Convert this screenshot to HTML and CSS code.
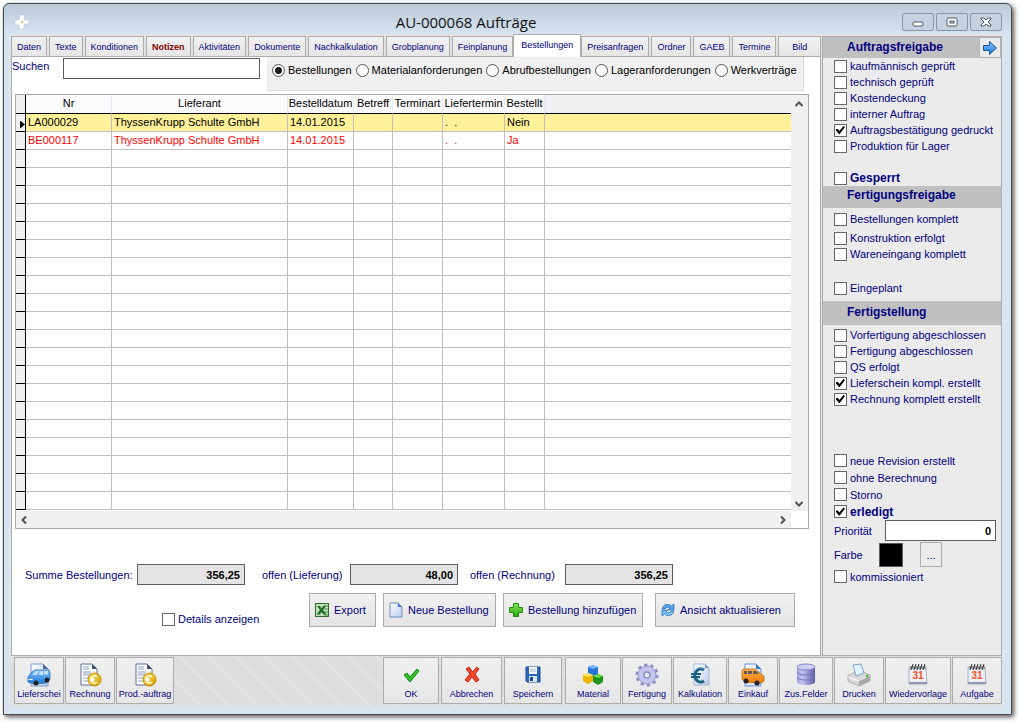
FILE: index.html
```html
<!DOCTYPE html>
<html lang="de">
<head>
<meta charset="utf-8">
<title>AU-000068 Aufträge</title>
<link rel="stylesheet" href="styles.css">
</head>
<body>
<svg class="defs" aria-hidden="true">
  <defs>
    <linearGradient id="gold" x1="0" y1="0" x2="1" y2="1"><stop offset="0" stop-color="#ffe45c"/><stop offset="1" stop-color="#d99a00"/></linearGradient>
    <linearGradient id="paper" x1="0" y1="0" x2="1" y2="1"><stop offset="0" stop-color="#ffffff"/><stop offset="1" stop-color="#b9cdf0"/></linearGradient>
    <linearGradient id="sky" x1="0" y1="0" x2="0" y2="1"><stop offset="0" stop-color="#7cc4fa"/><stop offset="1" stop-color="#1f78d8"/></linearGradient>
    <linearGradient id="orange" x1="0" y1="0" x2="0" y2="1"><stop offset="0" stop-color="#ffb347"/><stop offset="1" stop-color="#ee7c0c"/></linearGradient>
    <linearGradient id="drum" x1="0" y1="0" x2="1" y2="0"><stop offset="0" stop-color="#a3a3dd"/><stop offset=".3" stop-color="#c4c4f0"/><stop offset="1" stop-color="#5c5ca8"/></linearGradient>
    <linearGradient id="green" x1="0" y1="0" x2="0" y2="1"><stop offset="0" stop-color="#8aea50"/><stop offset="1" stop-color="#25a80c"/></linearGradient>
    <symbol id="i-invoice" viewBox="0 0 24 24">
      <path d="M3 1h11l5 5v16H3z" fill="#fff" stroke="#5a6c98"/>
      <path d="M5 8h8v5H5z" fill="#c3cde6"/><path d="M5 4h6M5 6h6M5 15h6M5 18h5" stroke="#8fa0c8"/>
      <path d="M14 1v5h5z" fill="#3e4f78"/>
      <circle cx="16.500" cy="16.500" r="6.500" fill="url(#gold)" stroke="#c98d00"/>
      <path d="M19 14a3.500 3.500 0 1 0 0 5M12.500 15.700h4.500M12.500 17.500h4" fill="none" stroke="#fff" stroke-width="1.500"/>
    </symbol>
    <symbol id="i-calendar" viewBox="0 0 24 24">
      <path d="M3 4h17l1 17H3z" fill="#eef0f6" stroke="#a9aec4"/><path d="M3 19h18v2H3z" fill="#8f96b8"/>
      <path d="M4 3h16v3H4z" fill="#9a9aa4"/>
      <path d="M5 7l2-6M8 7l2-6M11 7l2-6M14 7l2-6M17 7l2-6" stroke="#333" stroke-width="1"/>
      <text x="12" y="16" text-anchor="middle" class="cal-day">31</text>
    </symbol>
  </defs>
</svg>

<div class="window">
  <header class="titlebar">
    <svg class="app-icon" viewBox="0 0 16 16"><path d="M6 1h5l-1 5h5v4h-5v5H5v-4H1V6h4z" fill="#fff" stroke="#b9c9d8" stroke-width=".7"/><circle cx="8" cy="8" r="1" fill="#f08c3c"/></svg>
    <h1 class="title">AU-000068 Aufträge</h1>
    <div class="window-buttons">
      <button class="win-btn" type="button" aria-label="Minimieren"><svg viewBox="0 0 14 12"><rect x="2" y="6" width="10" height="4" rx="1" fill="#fff" stroke="#505866"/></svg></button>
      <button class="win-btn" type="button" aria-label="Maximieren"><svg viewBox="0 0 14 12"><rect x="2" y="2" width="10" height="8" rx="1" fill="#fff" stroke="#505866"/><rect x="5" y="5" width="4" height="2" fill="#c9d6e4" stroke="#505866"/></svg></button>
      <button class="win-btn" type="button" aria-label="Schließen"><svg viewBox="0 0 14 12"><path d="M2 2h3l2 2 2-2h3v1L9 6l3 3v1H9L7 8l-2 2H2V9l3-3-3-3z" fill="#fff" stroke="#505866"/></svg></button>
    </div>
  </header>

  <div class="client">
    <div class="columns">
      <main class="main">
        <div class="tabs" role="tablist">
          <button class="tab" type="button" role="tab">Daten</button>
          <button class="tab" type="button" role="tab">Texte</button>
          <button class="tab" type="button" role="tab">Konditionen</button>
          <button class="tab tab-note" type="button" role="tab">Notizen</button>
          <button class="tab" type="button" role="tab">Aktivitäten</button>
          <button class="tab" type="button" role="tab">Dokumente</button>
          <button class="tab" type="button" role="tab">Nachkalkulation</button>
          <button class="tab" type="button" role="tab">Grobplanung</button>
          <button class="tab" type="button" role="tab">Feinplanung</button>
          <button class="tab tab-active" type="button" role="tab" aria-selected="true">Bestellungen</button>
          <button class="tab" type="button" role="tab">Preisanfragen</button>
          <button class="tab" type="button" role="tab">Ordner</button>
          <button class="tab" type="button" role="tab">GAEB</button>
          <button class="tab" type="button" role="tab">Termine</button>
          <button class="tab tab-last" type="button" role="tab">Bild</button>
        </div>

        <section class="page">
          <div class="search-row">
            <label class="search-label" for="search">Suchen</label>
            <input class="search-input" id="search" type="text">
            <div class="radio-group" role="radiogroup">
              <label class="radio"><input type="radio" name="kind" checked>Bestellungen</label>
              <label class="radio"><input type="radio" name="kind">Materialanforderungen</label>
              <label class="radio"><input type="radio" name="kind">Abrufbestellungen</label>
              <label class="radio"><input type="radio" name="kind">Lageranforderungen</label>
              <label class="radio"><input type="radio" name="kind">Werkverträge</label>
            </div>
          </div>

          <div class="grid-box">
            <table class="grid">
              <colgroup><col class="c-mark"><col class="c-nr"><col class="c-supplier"><col class="c-date"><col class="c-subject"><col class="c-kind"><col class="c-delivery"><col class="c-ordered"><col></colgroup>
              <thead><tr><th></th><th>Nr</th><th>Lieferant</th><th>Bestelldatum</th><th>Betreff</th><th>Terminart</th><th>Liefertermin</th><th>Bestellt</th><th class="rest"></th></tr></thead>
              <tbody>
                <tr class="current"><td><span class="marker"></span></td><td>LA000029</td><td>ThyssenKrupp Schulte GmbH</td><td>14.01.2015</td><td></td><td></td><td>.&nbsp; .</td><td>Nein</td><td></td></tr>
                <tr class="done"><td></td><td>BE000117</td><td>ThyssenKrupp Schulte GmbH</td><td>14.01.2015</td><td></td><td></td><td>.&nbsp; .</td><td>Ja</td><td></td></tr>
                <tr><td></td><td></td><td></td><td></td><td></td><td></td><td></td><td></td><td></td></tr>
                <tr><td></td><td></td><td></td><td></td><td></td><td></td><td></td><td></td><td></td></tr>
                <tr><td></td><td></td><td></td><td></td><td></td><td></td><td></td><td></td><td></td></tr>
                <tr><td></td><td></td><td></td><td></td><td></td><td></td><td></td><td></td><td></td></tr>
                <tr><td></td><td></td><td></td><td></td><td></td><td></td><td></td><td></td><td></td></tr>
                <tr><td></td><td></td><td></td><td></td><td></td><td></td><td></td><td></td><td></td></tr>
                <tr><td></td><td></td><td></td><td></td><td></td><td></td><td></td><td></td><td></td></tr>
                <tr><td></td><td></td><td></td><td></td><td></td><td></td><td></td><td></td><td></td></tr>
                <tr><td></td><td></td><td></td><td></td><td></td><td></td><td></td><td></td><td></td></tr>
                <tr><td></td><td></td><td></td><td></td><td></td><td></td><td></td><td></td><td></td></tr>
                <tr><td></td><td></td><td></td><td></td><td></td><td></td><td></td><td></td><td></td></tr>
                <tr><td></td><td></td><td></td><td></td><td></td><td></td><td></td><td></td><td></td></tr>
                <tr><td></td><td></td><td></td><td></td><td></td><td></td><td></td><td></td><td></td></tr>
                <tr><td></td><td></td><td></td><td></td><td></td><td></td><td></td><td></td><td></td></tr>
                <tr><td></td><td></td><td></td><td></td><td></td><td></td><td></td><td></td><td></td></tr>
                <tr><td></td><td></td><td></td><td></td><td></td><td></td><td></td><td></td><td></td></tr>
                <tr><td></td><td></td><td></td><td></td><td></td><td></td><td></td><td></td><td></td></tr>
                <tr><td></td><td></td><td></td><td></td><td></td><td></td><td></td><td></td><td></td></tr>
                <tr><td></td><td></td><td></td><td></td><td></td><td></td><td></td><td></td><td></td></tr>
                <tr><td></td><td></td><td></td><td></td><td></td><td></td><td></td><td></td><td></td></tr>
              </tbody>
            </table>
            <div class="vscroll">
              <svg viewBox="0 0 10 10"><path d="M1.500 7L5 3.500 8.500 7" fill="none" stroke="#505050" stroke-width="2"/></svg>
              <svg viewBox="0 0 10 10"><path d="M1.500 3L5 6.500 8.500 3" fill="none" stroke="#505050" stroke-width="2"/></svg>
            </div>
            <div class="hscroll">
              <svg viewBox="0 0 10 10"><path d="M7 1.500L3.500 5 7 8.500" fill="none" stroke="#505050" stroke-width="2"/></svg>
              <svg viewBox="0 0 10 10"><path d="M3 1.500L6.500 5 3 8.500" fill="none" stroke="#505050" stroke-width="2"/></svg>
            </div>
          </div>

          <div class="sums">
            <label for="sum-all">Summe Bestellungen:</label><input class="sum" id="sum-all" type="text" value="356,25" readonly>
            <label class="sum-next" for="sum-delivery">offen (Lieferung)</label><input class="sum" id="sum-delivery" type="text" value="48,00" readonly>
            <label class="sum-last" for="sum-invoice">offen (Rechnung)</label><input class="sum" id="sum-invoice" type="text" value="356,25" readonly>
          </div>

          <div class="actions">
            <label class="check details"><input type="checkbox">Details anzeigen</label>
            <button class="action a-export" type="button"><svg viewBox="0 0 16 16"><rect x="1.500" y="1.500" width="13" height="13" fill="#c4dfbc" stroke="#2e6b34"/><path d="M10 4h4M10 7h4M10 10h4M10 13h4" stroke="#4d8a4d"/><path d="M3 4h3l1.500 2.500L9 4h3L9 8l3.500 4.500h-3L7.500 10 6 12.500H2.500L6 8z" fill="#1f6f28"/></svg>Export</button>
            <button class="action a-new" type="button"><svg viewBox="0 0 16 16"><path d="M2 1h8l4 4v10H2z" fill="url(#paper)" stroke="#6d8cc4"/><path d="M10 1v4h4z" fill="#3f78c8"/></svg>Neue Bestellung</button>
            <button class="action a-add" type="button"><svg viewBox="0 0 16 16"><path d="M5.500 1.500h5v4h4v5h-4v4h-5v-4h-4v-5h4z" fill="url(#green)" stroke="#1d8a12"/></svg>Bestellung hinzufügen</button>
            <button class="action a-refresh" type="button"><svg viewBox="0 0 16 16"><path d="M2 7C3 2.500 8 1 11.500 4L14 2v6H8l2-2C8 4.500 6 5 5 7z" fill="#55a8f0" stroke="#1c62b8" stroke-width=".7"/><path d="M14 9c-1 4.500-6 6-9.500 3L2 14V8h6l-2 2c2 1.500 4 1 5-1z" fill="#7cc0f8" stroke="#1c62b8" stroke-width=".7"/></svg>Ansicht aktualisieren</button>
          </div>
        </section>
      </main>

      <aside class="side">
        <h2 class="side-head head-order">Auftragsfreigabe<button class="next" type="button" aria-label="Weiter"><svg viewBox="0 0 16 16"><path d="M1.500 5.500h6v-4L14.500 8l-7 6.500v-4h-6z" fill="url(#sky)" stroke="#1c56a8"/></svg></button></h2>
        <div class="checks checks-order">
          <label class="check"><input type="checkbox">kaufmännisch geprüft</label>
          <label class="check"><input type="checkbox">technisch geprüft</label>
          <label class="check"><input type="checkbox">Kostendeckung</label>
          <label class="check"><input type="checkbox">interner Auftrag</label>
          <label class="check"><input type="checkbox" checked>Auftragsbestätigung gedruckt</label>
          <label class="check"><input type="checkbox">Produktion für Lager</label>
          <label class="check strong spaced"><input type="checkbox">Gesperrt</label>
        </div>
        <h2 class="side-head head-production">Fertigungsfreigabe</h2>
        <div class="checks checks-production">
          <label class="check loose"><input type="checkbox">Bestellungen komplett</label>
          <label class="check"><input type="checkbox">Konstruktion erfolgt</label>
          <label class="check"><input type="checkbox">Wareneingang komplett</label>
          <label class="check spaced"><input type="checkbox">Eingeplant</label>
        </div>
        <h2 class="side-head head-finish">Fertigstellung</h2>
        <div class="checks checks-finish">
          <label class="check"><input type="checkbox">Vorfertigung abgeschlossen</label>
          <label class="check"><input type="checkbox">Fertigung abgeschlossen</label>
          <label class="check"><input type="checkbox">QS erfolgt</label>
          <label class="check"><input type="checkbox" checked>Lieferschein kompl. erstellt</label>
          <label class="check"><input type="checkbox" checked>Rechnung komplett erstellt</label>
        </div>
        <div class="checks checks-state">
          <label class="check"><input type="checkbox">neue Revision erstellt</label>
          <label class="check"><input type="checkbox">ohne Berechnung</label>
          <label class="check"><input type="checkbox">Storno</label>
          <label class="check strong"><input type="checkbox" checked>erledigt</label>
          <div class="priority"><label for="priority">Priorität</label><input id="priority" type="text" value="0"></div>
          <div class="color"><span>Farbe</span><span class="swatch"></span><button class="pick" type="button">...</button></div>
          <label class="check"><input type="checkbox">kommissioniert</label>
        </div>
      </aside>
    </div>

    <nav class="toolbar">
      <button class="tool w50" type="button"><svg viewBox="0 0 24 24"><path d="M4 1h12l5 5v17H4z" fill="url(#paper)" stroke="#7f98cc"/><path d="M16 1v5h5z" fill="#4a68a8"/><path d="M1 14l4-5 3-2h14l1 3v6l-4 4-12 1-6-2z" fill="url(#sky)" stroke="#1c5fa8" stroke-width=".7"/><path d="M5 12l4-4h3l-2 4zM13 8h3v4h-4zM17 8h4v3.500h-4z" fill="#c4e2fa"/><circle cx="9" cy="20" r="2.500" fill="#222"/><circle cx="20" cy="17" r="2.500" fill="#222"/><path d="M1.500 16.500h4" stroke="#fff"/></svg><span>Lieferschei</span></button>
      <button class="tool w50" type="button"><svg><use href="#i-invoice"/></svg><span>Rechnung</span></button>
      <button class="tool w58" type="button"><svg><use href="#i-invoice"/></svg><span>Prod.-auftrag</span></button>
      <div class="tool-main">
        <button class="tool w56" type="button"><svg viewBox="0 0 24 24"><path d="M5 12l3-2 3 4 7-8 2 2-9 11z" fill="#2fc22a" stroke="#118a12"/></svg><span>OK</span></button>
        <button class="tool w61" type="button"><svg viewBox="0 0 24 24"><path d="M6 6l3-2 3.500 5L17 4l2 2-4 5 4 6-3 2-4-5-4 5-3-2 5-6z" fill="#f4452a" stroke="#c02410"/></svg><span>Abbrechen</span></button>
        <button class="tool w58" type="button"><svg viewBox="0 0 24 24"><path d="M5 4h14v15H6l-1-1z" fill="#2a68b8" stroke="#174a90"/><path d="M8 4h8v7H8z" fill="#fff"/><path d="M9 6h6M9 8h6" stroke="#a8b8cc"/><path d="M8 13h8v6H8z" fill="#dde5ee"/><path d="M9 14h3v4H9z" fill="#174a90"/></svg><span>Speichern</span></button>
      </div>
      <div class="tool-more">
        <button class="tool w56" type="button"><svg viewBox="0 0 24 24"><path d="M7 4l5-2 5 2v7l-5 2-5-2z" fill="#2472dc"/><path d="M7 4l5-2 5 2-5 2z" fill="#7ab8ff"/><path d="M2 12l5-2 5 2v6l-5 3-5-3z" fill="#edb400"/><path d="M2 12l5-2 5 2-5 2z" fill="#ffe66a"/><path d="M12 13l5-2 5 2v6l-5 3-5-3z" fill="#1f9418"/><path d="M12 13l5-2 5 2-5 2z" fill="#70dc50"/></svg><span>Material</span></button>
        <button class="tool w50" type="button"><svg viewBox="0 0 24 24"><circle cx="12" cy="12" r="9.500" fill="none" stroke="#8a8cc8" stroke-width="4" stroke-dasharray="3 2.970"/><circle cx="12" cy="12" r="9" fill="#c3c5ec" stroke="#9698d0"/><circle cx="12" cy="12" r="3" fill="#f0f0f4" stroke="#8a8cc8" stroke-width="1.500"/></svg><span>Fertigung</span></button>
        <button class="tool w54" type="button"><svg viewBox="0 0 24 24"><path d="M6 1h11l4 4v17H6z" fill="url(#paper)" stroke="#a4b4d4"/><path d="M17 1v4h4z" fill="#7f98c4"/><path d="M16 7A6 6.500 0 1 0 16 18" fill="none" stroke="#18607c" stroke-width="3"/><path d="M3 11h10M3 14h9" fill="none" stroke="#18607c" stroke-width="2"/><path d="M15.500 6.500A6 7 0 0 0 6 10" fill="none" stroke="#58a8c0"/></svg><span>Kalkulation</span></button>
        <button class="tool w50" type="button"><svg viewBox="0 0 24 24"><path d="M4 1h11l5 5v17H4z" fill="url(#paper)" stroke="#6f94d8"/><path d="M15 1v5h5z" fill="#3c78cc"/><path d="M1 8q0-2 2-2h11l6 5 3 2v5l-3 2-16-1-3-3z" fill="url(#orange)" stroke="#b85c08" stroke-width=".7"/><path d="M3 8h3v3H3zM7 8h4v3H7zM12 8h3l3 3h-6z" fill="#5c5a58"/><circle cx="5" cy="18" r="2.500" fill="#222"/><circle cx="16" cy="20" r="2.500" fill="#222"/></svg><span>Einkauf</span></button>
        <button class="tool w54" type="button"><svg viewBox="0 0 24 24"><path d="M3 4v15c0 4 18 4 18 0V4z" fill="url(#drum)"/><ellipse cx="12" cy="4" rx="9" ry="3" fill="#cfcff4" stroke="#8585c8"/><path d="M3 9c0 4 18 4 18 0M3 14c0 4 18 4 18 0" fill="none" stroke="#7474b8"/></svg><span>Zus.Felder</span></button>
        <button class="tool w50" type="button"><svg viewBox="0 0 24 24"><path d="M1 13l7-4 2 2 6-2 7 3v6l-11 5-11-5z" fill="#d8d8da" stroke="#909094" stroke-width=".7"/><path d="M6 2l8-1 3 9-8 3z" fill="#e4f2ff" stroke="#7fa4d0"/><path d="M1 14l11 4 11-5" fill="none" stroke="#fff"/><path d="M12 18v5l11-5v-5z" fill="#a8a8ac"/><circle cx="20" cy="13" r="1.300" fill="#40c030"/></svg><span>Drucken</span></button>
        <button class="tool w66" type="button"><svg><use href="#i-calendar"/></svg><span>Wiedervorlage</span></button>
        <button class="tool w50" type="button"><svg><use href="#i-calendar"/></svg><span>Aufgabe</span></button>
      </div>
    </nav>
  </div>
</div>
</body>
</html>
```
FILE: styles.css
```css
* { box-sizing: border-box; }
body { margin: 0; padding: 3px 8px 8px 3px; background: #fff; color: #000080; font: 11px/16px "Liberation Sans", Arial, sans-serif; }
button, input { font: inherit; color: inherit; margin: 0; }
button { padding: 0; }
svg { display: block; flex: none; }
.defs { position: absolute; width: 0; height: 0; }
.cal-day { fill: #f4511e; font: bold 10px "Liberation Sans", Arial, sans-serif; }

.window { display: flex; flex-direction: column; min-height: calc(100vh - 11px); padding: 0 8px 7px 7px; border: 1px solid #45484c; border-radius: 6px 6px 0 0; background: linear-gradient(#bccad8, #d7e4f1 32px); box-shadow: 2px 2px 5px #555; }

.titlebar { display: grid; grid-template-columns: 28px 1fr 110px; align-items: center; height: 30px; }
.app-icon { width: 16px; height: 16px; margin-left: 3px; margin-top: 6px; }
.title { margin: 6px 0 0; color: #111; font: 15px/20px "Open Sans", sans-serif; text-align: center; }
.window-buttons { display: flex; justify-content: flex-end; gap: 2px; margin: 6px 1px 0 0; }
.win-btn { display: flex; align-items: center; justify-content: center; width: 32px; height: 18px; border: 1px solid #8796ad; border-radius: 2px; background: #c5d3e1; }
.win-btn svg { width: 14px; height: 12px; }

.client { flex: 1; display: flex; flex-direction: column; padding-right: 1px; background: #e4e4e4; }
.columns { flex: 1; display: grid; grid-template-columns: minmax(0, 1fr) 180px; gap: 1px; }
.main { display: flex; flex-direction: column; }

.tabs { display: flex; align-items: flex-end; gap: 2px; height: 22px; }
.tab { height: 20px; padding: 0 5px; border: 1px solid #acacac; border-bottom: 0; background: linear-gradient(#f1f1f1, #e6e6e6); font-size: 9px; line-height: 18px; white-space: nowrap; }
.tab-note { color: #800000; font-weight: bold; }
.tab-active { z-index: 1; height: 23px; margin: 0 -2px -1px; padding: 0 7px 3px; background: #fff; }
.tab-last { flex: 1; }

.page { flex: 1; border: 1px solid #acacac; background: #fff; }
.search-row { display: flex; align-items: flex-start; height: 34px; }
.search-label { width: 51px; padding-top: 1px; }
.search-input { width: 197px; height: 21px; margin: 1px 7px 0 0; padding: 0 4px; border: 1px solid #5c5c5c; background: #fff; }
.radio-group { flex: 1; display: flex; gap: 4px; height: 34px; margin-right: 16px; padding: 5px 0 0 5px; border: solid #dcdcdc; border-width: 0 1px 1px 0; background: #f0f0f0; color: #000; }
.radio { display: flex; align-items: center; gap: 3px; height: 16px; white-space: nowrap; }
.radio input { appearance: none; width: 13px; height: 13px; border: 1px solid #555; border-radius: 50%; background: #fff; }
.radio input:checked { background: radial-gradient(#1a1a1a 3px, #fff 4px); }

.grid-box { display: grid; grid-template-columns: minmax(0, 1fr) 17px; grid-template-rows: auto 17px; margin: 3px 11px 0 3px; border: 1px solid #a5a8ad; }
.grid { width: 100%; table-layout: fixed; border-collapse: separate; border-spacing: 0; color: #000; line-height: 16px; margin-bottom: 1px; }
.c-mark { width: 10px; }
.c-nr { width: 86px; }
.c-supplier { width: 176px; }
.c-date { width: 66px; }
.c-subject { width: 39px; }
.c-kind { width: 50px; }
.c-delivery { width: 62px; }
.c-ordered { width: 40px; }
.grid th { height: 19px; padding: 0 0 2px; border-right: 1px solid #e6ecf5; border-bottom: 1px solid #000; background: #fcfcfc; font-weight: normal; white-space: nowrap; }
.grid .rest { background: #f0f0f0; }
.grid td { height: 18px; padding: 0 0 1px 2px; border-right: 1px solid #c0c0c0; border-bottom: 1px solid #c0c0c0; white-space: nowrap; }
.grid th:first-child, .grid td:first-child { padding: 0; border-right-color: #000; border-bottom-color: #000; background: #f0f0f0; }
.grid th:last-child, .grid td:last-child { border-right: 0; }
.current { background: #fff09a; }
.done { color: #f00; }
.marker { display: block; width: 5px; height: 8px; margin: 4px 0 0 4px; background: #000; clip-path: polygon(0 0, 100% 50%, 0 100%); }
.vscroll, .hscroll { display: flex; justify-content: space-between; background: #f0f0f0; }
.vscroll { flex-direction: column; padding: 4px 3px 2px; }
.hscroll { padding: 3px; align-items: center; }
.vscroll svg, .hscroll svg { width: 10px; height: 10px; }

.sums { display: grid; grid-template-columns: 112px 108px 105px 108px 107px 108px; align-items: center; margin: 35px 0 0 13px; }
.sum-next { padding-left: 17px; }
.sum-last { padding-left: 12px; }
.sum { width: 100%; height: 21px; padding: 0 4px; border: 1px solid #5c5c5c; background: #e4e4e4; color: #000; font-weight: bold; text-align: right; }
.actions { display: flex; margin: 8px 0 28px 150px; }
.actions .details { width: 147px; margin-top: 18px; }
.action { display: flex; align-items: center; gap: 4px; height: 34px; margin-right: 7px; padding: 0 4px; border: 1px solid #acacac; background: linear-gradient(#f1f1f1, #e4e4e4); white-space: nowrap; }
.action svg { width: 16px; height: 16px; }
.a-export { width: 67px; }
.a-new { width: 113px; }
.a-add { width: 140px; margin-right: 12px; }
.a-refresh { width: 140px; margin-right: 0; }

.check { display: flex; align-items: center; gap: 3px; height: 16px; white-space: nowrap; }
.check input { appearance: none; flex: none; width: 13px; height: 13px; border: 1px solid #666; background: #fff; }
.check input:checked::before { content: ""; display: block; width: 9px; height: 9px; margin: 1px; background: #000; clip-path: polygon(0 40%, 20% 40%, 38% 62%, 82% 5%, 100% 18%, 42% 95%, 32% 95%, 0 55%); }
.strong { font-size: 12px; font-weight: bold; }

.side { margin-top: 2px; border: 1px solid #acacac; background: #ebebeb; }
.side-head { display: flex; justify-content: space-between; margin: 0; padding-left: 24px; background: #c0c0c0; font-size: 12px; line-height: 20px; }
.head-order { height: 21px; }
.head-production { height: 22px; line-height: 18px; }
.head-finish { height: 24px; line-height: 22px; }
.next { display: flex; align-items: center; justify-content: center; width: 22px; height: 21px; border: 1px solid #b4b4b4; background: #ebebeb; }
.next svg { width: 16px; height: 16px; }
.checks { padding-left: 11px; }
.checks-order .spaced { margin-top: 16px; }
.checks-production { padding-top: 3px; padding-bottom: 5px; }
.checks-production .loose { margin-bottom: 3px; }
.checks-production .spaced { margin-top: 18px; }
.checks-finish { padding-top: 2px; }
.checks-state { padding-top: 45px; padding-bottom: 20px; }
.checks-state .check { height: 17px; }
.priority { display: flex; align-items: center; }
.priority label { width: 51px; }
.priority input { flex: 1; min-width: 0; height: 21px; margin-right: 5px; padding: 0 4px; border: 1px solid #5c5c5c; background: #fff; color: #000; font-weight: bold; text-align: right; }
.color { display: flex; align-items: center; height: 27px; }
.color span:first-child { width: 45px; }
.swatch { width: 24px; height: 24px; border: 1px solid #5c5c5c; background: #000; }
.pick { width: 22px; height: 25px; margin-left: 17px; border: 1px solid #acacac; background: #ececec; }

.toolbar { display: flex; gap: 1px; padding: 1px 0 3px 3px; background: repeating-linear-gradient(45deg, #dedede 0 12px, #e3e3e3 14px 15px, #dedede 17px 20px); }
.tool { display: flex; flex-direction: column; align-items: center; height: 47px; padding-top: 5px; overflow: hidden; border: 1px solid #acacac; background: linear-gradient(#f0f0f0, #e6e6e6); font-size: 9px; line-height: 14px; white-space: nowrap; }
.tool svg { width: 24px; height: 24px; }
.tool-main { display: flex; gap: 2px; margin-left: auto; margin-right: 2px; }
.tool-more { display: flex; gap: 1px; }
.w50 { width: 50px; }
.w54 { width: 54px; }
.w56 { width: 56px; }
.w58 { width: 58px; }
.w61 { width: 61px; }
.w66 { width: 66px; }
```
